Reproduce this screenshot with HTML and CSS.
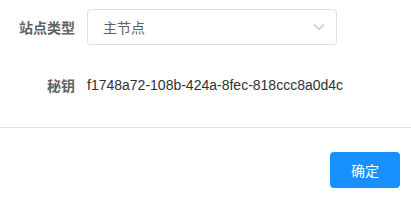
FILE: index.html
```html
<!DOCTYPE html>
<html lang="zh-CN">

<head>
  <meta charset="UTF-8">
  <meta name="viewport" content="width=device-width, initial-scale=1.0">
  <title>站点设置</title>
  <link rel="stylesheet" href="styles.css">
</head>

<body>
  <div class="dialog">
    <form class="site-form">
      <div class="form-item">
        <label class="form-label">站点类型</label>
        <div class="form-content">
          <div class="select">
            <span class="select-value">主节点</span>
            <svg class="select-arrow" width="12" height="8" viewBox="0 0 12 8">
              <path d="M1 1.5 L6 6.5 L11 1.5" fill="none" stroke="#c0c4cc" stroke-width="1.2"/>
            </svg>
          </div>
        </div>
      </div>
      <div class="form-item">
        <label class="form-label">秘钥</label>
        <div class="form-content">
          <span class="secret">f1748a72-108b-424a-8fec-818ccc8a0d4c</span>
        </div>
      </div>
    </form>
    <div class="dialog-footer">
      <button type="button" class="btn-primary">确定</button>
    </div>
  </div>
</body>

</html>
```

FILE: styles.css
```css
body {
  margin: 0;
  font-family: "Liberation Sans", "Noto Sans CJK SC", sans-serif;
  font-size: 14px;
  color: #303133;
  background: #fff;
}

.site-form {
  padding: 9px 0 2px;
}

.form-item {
  display: flex;
  align-items: center;
  height: 36px;
  margin-bottom: 22px;
}

.form-label {
  width: 75px;
  padding-right: 12px;
  text-align: right;
  font-weight: bold;
  color: #606266;
}

.form-content {
  display: flex;
  align-items: center;
}

.select {
  box-sizing: border-box;
  width: 250px;
  height: 36px;
  display: flex;
  align-items: center;
  justify-content: space-between;
  padding: 0 11px 0 15px;
  border: 1px solid #dcdfe6;
  border-radius: 4px;
  color: #606266;
}

.select-arrow {
  display: block;
}

.secret {
  color: #303133;
}

.dialog-footer {
  border-top: 1px solid #dcdfe6;
  display: flex;
  justify-content: flex-end;
  padding: 24px 11px 0;
}

.btn-primary {
  width: 70px;
  height: 36px;
  border: none;
  border-radius: 4px;
  background: #1890ff;
  color: #fff;
  font-family: "Liberation Sans", "Noto Sans CJK SC", sans-serif;
  font-size: 14px;
  cursor: pointer;
}
```
